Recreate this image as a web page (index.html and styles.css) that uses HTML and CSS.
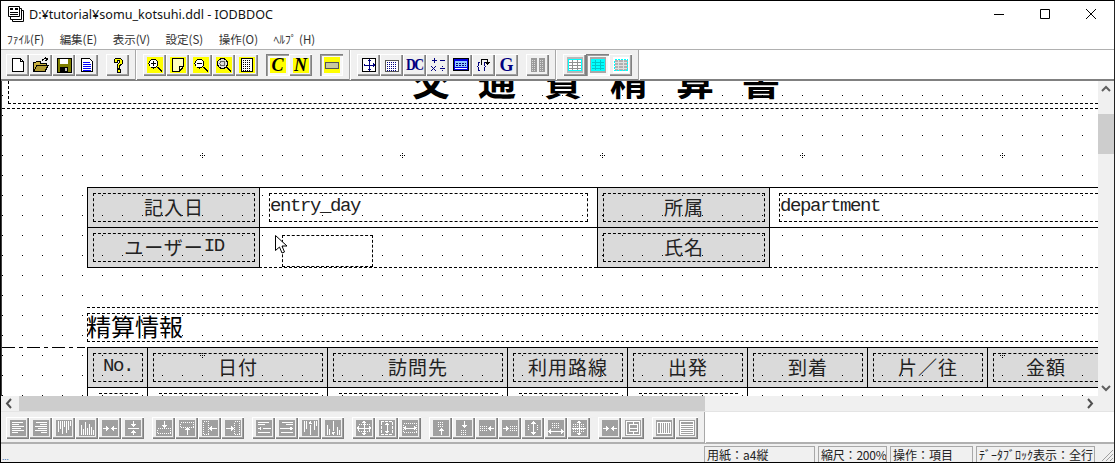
FILE: index.html
```html
<!DOCTYPE html>
<html lang="ja">
<head>
    <meta charset="UTF-8">
    <title>IODBDOC</title>
    <link rel="stylesheet" href="styles.css">
</head>
<body>
<svg class="defs" width="0" height="0">
    <defs>
        <!-- top toolbar -->
        <symbol id="i-new" viewBox="0 0 16 16"><path d="M2.5 1.5h8l3 3v10h-11z" fill="#fff" stroke="#000"/><path d="M10.5 1.5v3h3" fill="none" stroke="#000"/></symbol>
        <symbol id="i-open" viewBox="0 0 16 16"><path d="M.5 14.5v-9h2l1-1h4v2h6v2h-9l-3 6h10l3-6" fill="#c8b040" stroke="#000"/><path d="M1 14l3-5.5h11l-3 6z" fill="#b09a30" stroke="#000"/><path d="M9 4c1-2 3-3 5-2M12 .5l2.500 1.500-2 2" fill="none" stroke="#000"/></symbol>
        <symbol id="i-save" viewBox="0 0 16 16"><path d="M1 1h14v14H1z" fill="#808000" stroke="#000"/><path d="M4 2h8v5H4z" fill="#fff"/><path d="M4 10h8v5H4z" fill="#000"/><path d="M9 11h2v3H9z" fill="#c0c0c0"/></symbol>
        <symbol id="i-doc" viewBox="0 0 16 16"><path d="M2.500 1.500h8l3 3v10h-11z" fill="#fff" stroke="#000"/><path d="M4 5h7M4 7h8M4 9h8M4 11h8M4 13h8" stroke="#00f"/></symbol>
        <symbol id="i-help" viewBox="0 0 16 16"><path d="M4 5V3l2-2h4l2 2v4l-3 2v2H7V8l2-2V3H7v2zM7 12h3v3H7z" fill="#ff0" stroke="#000"/></symbol>
        <symbol id="i-zoomin" viewBox="0 0 16 16"><path d="M0 0h16v16H0z" fill="#ff0"/><circle cx="6.500" cy="6.500" r="4.500" fill="#fff" stroke="#000"/><path d="M4 6.500h5M6.500 4v5M10 10l5 5" stroke="#000"/><path d="M11 10l4 4" stroke="#000"/></symbol>
        <symbol id="i-page" viewBox="0 0 16 16"><path d="M0 0h16v16H0z" fill="#ff0"/><path d="M2.500 1.500h11v8l-4 5h-7z" fill="#ffffc0" stroke="#000"/><path d="M9.500 14.500v-5h4" fill="none" stroke="#000"/></symbol>
        <symbol id="i-zoomout" viewBox="0 0 16 16"><path d="M0 0h16v16H0z" fill="#ff0"/><circle cx="6.500" cy="6.500" r="4.500" fill="#fff" stroke="#000"/><path d="M4 6.500h5M10 10l5 5M11 10l4 4" stroke="#000"/></symbol>
        <symbol id="i-zooms" viewBox="0 0 16 16"><path d="M0 0h16v16H0z" fill="#ff0"/><circle cx="6.500" cy="6.500" r="5" fill="#ddd" stroke="#000"/><circle cx="6.500" cy="6.500" r="2.500" fill="none" stroke="#666"/><path d="M10 10l5 5M11 10l4 4" stroke="#000"/></symbol>
        <symbol id="i-dots" viewBox="0 0 16 16"><path d="M0 0h16v16H0z" fill="#ff0"/><path d="M2.500 1.500h11v13h-11z" fill="#fff" stroke="#000"/><path d="M4 3.500h8M4 5.500h8M4 7.500h8M4 9.500h8M4 11.500h8M4 13h8" stroke="#000" stroke-dasharray="1 1"/></symbol>
        <symbol id="i-rect" viewBox="0 0 16 16"><path d="M0 0h16v16H0z" fill="#ff0"/><path d="M1.500 5.500h13v6h-13z" fill="#c8c8a0" stroke="#555"/></symbol>
        <symbol id="i-move" viewBox="0 0 16 16"><path d="M1.500 1.500h13v13h-13z" fill="#fff" stroke="#000"/><path d="M8 3v10M3 8h10" stroke="#000080"/><path d="M8 2l2 2H6zM8 14l2-2H6zM2 8l2-2v4zM14 8l-2-2v4z" fill="#000080"/></symbol>
        <symbol id="i-table" viewBox="0 0 16 16"><path d="M1.500 3.500h13v11h-13z" fill="#fff" stroke="#555"/><path d="M3 5.500h10M3 7.500h10M3 9.500h10M3 11.500h10M3 13.500h10" stroke="#000080" stroke-dasharray="1 1"/></symbol>
        <symbol id="i-calc" viewBox="0 0 16 16"><path d="M4 1v5M1.500 3.500h5M10 3.500h5M1 9l5 5M6 9l-5 5M10 11.500h5" stroke="#000080" fill="none"/><path d="M12 9h1v1h-1zM12 13h1v1h-1z" fill="#000080"/></symbol>
        <symbol id="i-win" viewBox="0 0 16 16"><path d="M.5 1.500h15v12H.5z" fill="#0000e0" stroke="#000"/><path d="M2 4h12v6H2z" fill="#90c8ff"/><path d="M3 6h10M3 8h10" stroke="#000080" stroke-dasharray="2 1"/><path d="M2 11h12v1H2z" fill="#fff"/></symbol>
        <symbol id="i-brace" viewBox="0 0 16 16"><path d="M3.500 5.500h-1v3l-1 1 1 1v3h1M7.500 5.500h1v3l1 1-1 1v3h-1" fill="none" stroke="#000080"/><path d="M5.500 8V2.500h6V6" fill="none" stroke="#000"/><path d="M9 5h5l-2.500 3z" fill="#000"/></symbol>
        <symbol id="i-off" viewBox="0 0 16 16"><path d="M1 1h6v14H1zM9 1h6v14H9z" fill="#9a9a9a"/><path d="M2 3h4M2 5h4M2 7h4M2 9h4M2 11h4M2 13h4M10 3h4M10 5h4M10 7h4M10 9h4M10 11h4M10 13h4" stroke="#d8d8d8" stroke-dasharray="1 1"/></symbol>
        <symbol id="i-grid1" viewBox="0 0 16 16"><path d="M0 0h16v16H0z" fill="#b8b8b8"/><path d="M1.500 2.500h13v11h-13z" fill="#fff" stroke="#0ff"/><path d="M2 5.500h12M2 8.500h12M2 11h12M5.500 3v10M10.500 3v10" stroke="#909090"/></symbol>
        <symbol id="i-grid2" viewBox="0 0 16 16"><path d="M0 0h16v16H0z" fill="#a8a8a8"/><path d="M1 2h14v12H1z" fill="#0ff"/><path d="M2 5.500h12M2 8.500h12M2 11h12M5.500 3v10M10.500 3v10" stroke="#00c8c8"/></symbol>
        <symbol id="i-grid3" viewBox="0 0 16 16"><path d="M0 0h16v16H0z" fill="#fff"/><path d="M1.500 2.500h13v11h-13z" fill="#b0b0b0" stroke="#0ff" stroke-dasharray="2 1"/><path d="M2 5.500h12M2 8.500h12M2 11h12M5.500 3v10M10.500 3v10" stroke="#e0e0e0"/></symbol>

        <!-- bottom toolbar: white marks on gray -->
        <symbol id="b-left" viewBox="0 0 16 16"><path d="M0 0h16v16H0z" fill="#a0a0a0"/><path d="M2 2.500h11M2 4.500h7M2 6.500h12M2 8.500h9M2 10.500h12M2 12.500h6" stroke="#fff"/></symbol>
        <symbol id="b-right" viewBox="0 0 16 16"><path d="M0 0h16v16H0z" fill="#a0a0a0"/><path d="M3 2.500h11M7 4.500h7M2 6.500h12M5 8.500h9M2 10.500h12M8 12.500h6" stroke="#fff"/></symbol>
        <symbol id="b-top" viewBox="0 0 16 16"><path d="M0 0h16v16H0z" fill="#a0a0a0"/><path d="M2.500 1v11M4.500 1v8M6.500 1v13M8.500 1v6M10.500 1v12M12.500 1v9M14.500 1v5" stroke="#fff"/></symbol>
        <symbol id="b-bottom" viewBox="0 0 16 16"><path d="M0 0h16v16H0z" fill="#a0a0a0"/><path d="M2.500 15V5M4.500 15V9M6.500 15V2M8.500 15V8M10.500 15V4M12.500 15V7M14.500 15V10" stroke="#fff"/></symbol>
        <symbol id="b-inh" viewBox="0 0 16 16"><path d="M0 0h16v16H0z" fill="#a0a0a0"/><path d="M1 8.500h5M10 8.500h5" stroke="#fff"/><path d="M7 8.500l-3-3v6zM9 8.500l3-3v6z" fill="#fff"/></symbol>
        <symbol id="b-inv" viewBox="0 0 16 16"><path d="M0 0h16v16H0z" fill="#a0a0a0"/><path d="M8.500 1v4M8.500 11v4M3 8.500h11" stroke="#fff"/><path d="M8.500 7l-3-3h6zM8.500 10l-3 3h6z" fill="#fff"/></symbol>
        <symbol id="b-dtop" viewBox="0 0 16 16"><path d="M0 0h16v16H0z" fill="#a0a0a0"/><path d="M8.500 1v5" stroke="#fff"/><path d="M8.500 8l-3-3h6z" fill="#fff"/><path d="M1.500 8.500h13v5h-13z" fill="none" stroke="#fff" stroke-dasharray="1 1"/></symbol>
        <symbol id="b-dbot" viewBox="0 0 16 16"><path d="M0 0h16v16H0z" fill="#a0a0a0"/><path d="M1.500 2.500h13v5h-13z" fill="none" stroke="#fff" stroke-dasharray="1 1"/><path d="M8.500 15v-5" stroke="#fff"/><path d="M8.500 7l-3 3h6z" fill="#fff"/></symbol>
        <symbol id="b-dleft" viewBox="0 0 16 16"><path d="M0 0h16v16H0z" fill="#a0a0a0"/><path d="M1.500 1.500h5v13h-5z" fill="none" stroke="#fff" stroke-dasharray="1 1"/><path d="M10 8.500h5" stroke="#fff"/><path d="M7 8.500l3-3v6z" fill="#fff"/></symbol>
        <symbol id="b-dright" viewBox="0 0 16 16"><path d="M0 0h16v16H0z" fill="#a0a0a0"/><path d="M9.500 1.500h5v13h-5z" fill="none" stroke="#fff" stroke-dasharray="1 1"/><path d="M1 8.500h5" stroke="#fff"/><path d="M9 8.500l-3-3v6z" fill="#fff"/></symbol>
        <symbol id="b-lleft" viewBox="0 0 16 16"><path d="M0 0h16v16H0z" fill="#a0a0a0"/><path d="M2 2.500h11M2 4.500h7M7 8.500h8M2 12.500h12" stroke="#fff"/><path d="M2 8.500l3-2v4z" fill="#fff"/></symbol>
        <symbol id="b-lright" viewBox="0 0 16 16"><path d="M0 0h16v16H0z" fill="#a0a0a0"/><path d="M3 2.500h11M7 4.500h7M1 8.500h10M2 12.500h12" stroke="#fff"/><path d="M14 8.500l-3-2v4z" fill="#fff"/></symbol>
        <symbol id="b-ltop" viewBox="0 0 16 16"><path d="M0 0h16v16H0z" fill="#a0a0a0"/><path d="M2.500 1v11M4.500 1v8M8.500 5v10M12.500 1v9M14.500 1v5" stroke="#fff"/><path d="M8.500 1l-2 3h4z" fill="#fff"/></symbol>
        <symbol id="b-lbot" viewBox="0 0 16 16"><path d="M0 0h16v16H0z" fill="#a0a0a0"/><path d="M2.500 15V5M4.500 15V9M8.500 1v10M12.500 15V7M14.500 15V10" stroke="#fff"/><path d="M8.500 15l-2-3h4z" fill="#fff"/></symbol>
        <symbol id="b-cross" viewBox="0 0 16 16"><path d="M0 0h16v16H0z" fill="#a0a0a0"/><path d="M2.500 4.500h11v7h-11z" fill="none" stroke="#fff" stroke-dasharray="1 1"/><path d="M8 2v12M1 8h14" stroke="#fff"/><path d="M8 0l2 3H6zM8 16l2-3H6zM0 8l3-2v4zM16 8l-3-2v4z" fill="#fff"/></symbol>
        <symbol id="b-vbox" viewBox="0 0 16 16"><path d="M0 0h16v16H0z" fill="#a0a0a0"/><path d="M2 1.500h12M2 14.500h12M2.500 2v12M13.500 2v12" stroke="#fff" stroke-dasharray="3 1"/><path d="M8 3v10" stroke="#fff"/><path d="M8 2l2 3H6zM8 14l2-3H6z" fill="#fff"/></symbol>
        <symbol id="b-hbox" viewBox="0 0 16 16"><path d="M0 0h16v16H0z" fill="#a0a0a0"/><path d="M1.500 3.500h13v9h-13z" fill="none" stroke="#fff" stroke-dasharray="1 1"/><path d="M2 8h12" stroke="#fff"/><path d="M1 8l3-2v4zM15 8l-3-2v4z" fill="#fff"/></symbol>
        <symbol id="b-sup" viewBox="0 0 16 16"><path d="M0 0h16v16H0z" fill="#a0a0a0"/><path d="M5 2h6M5 4h6M5 6h6" stroke="#fff" stroke-dasharray="1 1"/><path d="M8.500 15v-5" stroke="#fff"/><path d="M8.500 8l-3 3h6z" fill="#fff"/></symbol>
        <symbol id="b-sdown" viewBox="0 0 16 16"><path d="M0 0h16v16H0z" fill="#a0a0a0"/><path d="M8.500 1v5" stroke="#fff"/><path d="M8.500 8l-3-3h6z" fill="#fff"/><path d="M5 10h6M5 12h6M5 14h6" stroke="#fff" stroke-dasharray="1 1"/></symbol>
        <symbol id="b-sleft" viewBox="0 0 16 16"><path d="M0 0h16v16H0z" fill="#a0a0a0"/><path d="M1 6.500h7M1 8.500h7M1 10.500h7" stroke="#fff" stroke-dasharray="1 1"/><path d="M10 8.500h5" stroke="#fff"/><path d="M9 8.500l3-3v6z" fill="#fff"/></symbol>
        <symbol id="b-sright" viewBox="0 0 16 16"><path d="M0 0h16v16H0z" fill="#a0a0a0"/><path d="M1 8.500h5" stroke="#fff"/><path d="M7 8.500l-3-3v6z" fill="#fff"/><path d="M8 6.500h7M8 8.500h7M8 10.500h7" stroke="#fff" stroke-dasharray="1 1"/></symbol>
        <symbol id="b-vdots" viewBox="0 0 16 16"><path d="M0 0h16v16H0z" fill="#a0a0a0"/><path d="M8 3v10" stroke="#fff"/><path d="M8 1l3 3H5zM8 15l3-3H5z" fill="#fff"/><path d="M3.500 5v6M12.500 5v6" stroke="#fff" stroke-dasharray="1 1"/></symbol>
        <symbol id="b-hdots" viewBox="0 0 16 16"><path d="M0 0h16v16H0z" fill="#a0a0a0"/><path d="M4 3h8M4 5h8M4 7h8" stroke="#fff" stroke-dasharray="1 1"/><path d="M2 11.500h12" stroke="#fff"/><path d="M0 11.500l3-3v6zM16 11.500l-3-3v6z" fill="#fff"/></symbol>
        <symbol id="b-cdots" viewBox="0 0 16 16"><path d="M0 0h16v16H0z" fill="#a0a0a0"/><path d="M2 4.500h12M2 6.500h12M2 9.500h12M2 11.500h12" stroke="#fff" stroke-dasharray="1 1"/><path d="M8 2v12M1 8h14" stroke="#fff"/><path d="M8 0l2 3H6zM8 16l2-3H6z" fill="#fff"/></symbol>
        <symbol id="b-center" viewBox="0 0 16 16"><path d="M0 0h16v16H0z" fill="#a0a0a0"/><path d="M1 8.500h4M11 8.500h4" stroke="#fff"/><path d="M7 8.500l-3-3v6zM9 8.500l3-3v6z" fill="#fff"/></symbol>
        <symbol id="b-page" viewBox="0 0 16 16"><path d="M0 0h16v16H0z" fill="#a0a0a0"/><path d="M1.500 1.500h13v13h-13zM8.500 1v3M8.500 12v3M4.500 4.500h8v7h-8zM4 8h9" fill="none" stroke="#fff"/></symbol>
        <symbol id="b-vlines" viewBox="0 0 16 16"><path d="M0 0h16v16H0z" fill="#a0a0a0"/><path d="M1.500 2.500h13v11h-13zM4.500 3v10M6.500 3v10M8.500 3v10M10.500 3v10M12.500 3v10" fill="none" stroke="#fff"/></symbol>
        <symbol id="b-hlines" viewBox="0 0 16 16"><path d="M0 0h16v16H0z" fill="#a0a0a0"/><path d="M1.500 1.500h13v13h-13zM2 4.500h12M2 6.500h12M2 8.500h12M2 10.500h12M2 12.500h12" fill="none" stroke="#fff"/></symbol>
        <pattern id="grid-dots" width="20" height="20" patternUnits="userSpaceOnUse"><rect x="0" y="14" width="1" height="1" fill="#000"/></pattern>
        <path id="mark" d="M0-2h1v1H0zM0 2h1v1H0zM-2 0h1v1h-1zM2 0h1v1H2z" fill="#000"/>
    </defs>
</svg>

<div class="window">
    <div class="titlebar">
        <svg class="app-icon" width="16" height="16" viewBox="0 0 16 16">
            <path d="M4.500 4.500h11v11h-11z" fill="#fff" stroke="#000"/>
            <path d="M2.500 2.500h11v11h-11z" fill="#fff" stroke="#000"/>
            <path d="M.5.500h11v10h-11z" fill="#fff" stroke="#000" stroke-width="1"/>
            <path d="M2 2h3v2H2zM7 2h3v2H7zM2 6h8v1H2zM2 8h8v1H2z" fill="#000"/>
        </svg>
        <span class="title-text">D:¥tutorial¥somu_kotsuhi.ddl - IODBDOC</span>
        <div class="win-controls">
            <div class="win-btn"><svg width="10" height="10"><path d="M0 5.500h10" stroke="#000"/></svg></div>
            <div class="win-btn"><svg width="10" height="10"><path d="M.5.500h9v9h-9z" fill="none" stroke="#000"/></svg></div>
            <div class="win-btn"><svg width="10" height="10"><path d="M0 0l10 10M10 0L0 10" stroke="#000"/></svg></div>
        </div>
    </div>

    <div class="menubar">
        <span class="menu-item">ﾌｧｲﾙ(F)</span>
        <span class="menu-item">編集(E)</span>
        <span class="menu-item">表示(V)</span>
        <span class="menu-item">設定(S)</span>
        <span class="menu-item">操作(O)</span>
        <span class="menu-item">ﾍﾙﾌﾟ (H)</span>
    </div>

    <div class="toolbar top-bar">
        <div class="tools">
            <div class="group">
                <div class="tb"><svg><use href="#i-new"/></svg></div>
                <div class="tb"><svg><use href="#i-open"/></svg></div>
                <div class="tb"><svg><use href="#i-save"/></svg></div>
                <div class="tb"><svg><use href="#i-doc"/></svg></div>
            </div>
            <div class="group">
                <div class="tb"><svg><use href="#i-help"/></svg></div>
            </div>
            <div class="sep"></div>
            <div class="group">
                <div class="tb"><svg><use href="#i-zoomin"/></svg></div>
                <div class="tb"><svg><use href="#i-page"/></svg></div>
                <div class="tb"><svg><use href="#i-zoomout"/></svg></div>
                <div class="tb"><svg><use href="#i-zooms"/></svg></div>
                <div class="tb"><svg><use href="#i-dots"/></svg></div>
            </div>
            <div class="group">
                <div class="tb pressed"><span class="glyph-y">C</span></div>
                <div class="tb"><span class="glyph-y">N</span></div>
            </div>
            <div class="group">
                <div class="tb pressed"><svg><use href="#i-rect"/></svg></div>
            </div>
            <div class="sep"></div>
            <div class="group">
                <div class="tb"><svg><use href="#i-move"/></svg></div>
                <div class="tb"><svg><use href="#i-table"/></svg></div>
                <div class="tb"><span class="glyph-b narrow">DC</span></div>
                <div class="tb"><svg><use href="#i-calc"/></svg></div>
                <div class="tb"><svg><use href="#i-win"/></svg></div>
                <div class="tb"><svg><use href="#i-brace"/></svg></div>
                <div class="tb"><span class="glyph-b">G</span></div>
            </div>
            <div class="group">
                <div class="tb"><svg><use href="#i-off"/></svg></div>
            </div>
            <div class="sep"></div>
            <div class="group">
                <div class="tb"><svg><use href="#i-grid1"/></svg></div>
                <div class="tb pressed"><svg><use href="#i-grid2"/></svg></div>
                <div class="tb"><svg><use href="#i-grid3"/></svg></div>
            </div>
            <div class="sep last"></div>
        </div>
    </div>

    <div class="workarea">
        <div class="canvas">
            <div class="report-title">交通費精算書</div>
            <div class="title-box"></div>
            <div class="title-rule"></div>

            <div class="sheet head-table">
                <div class="cell label"><div class="field">記入日</div></div>
                <div class="cell"><div class="field value">entry_day</div></div>
                <div class="cell label"><div class="field">所属</div></div>
                <div class="cell open"><div class="field value">department</div></div>
                <div class="cell label low"><div class="field">ユーザー<span class="half">ID</span></div></div>
                <div class="cell low-open"></div>
                <div class="cell label low"><div class="field">氏名</div></div>
                <div class="cell low-open"></div>
            </div>

            <div class="section">
                <div class="section-title">精算情報</div>
            </div>
            <div class="dash-dot"></div>

            <div class="sheet detail-table">
                <div class="cell label"><div class="field"><span class="half">No.</span></div></div>
                <div class="cell label"><div class="field">日付</div></div>
                <div class="cell label"><div class="field">訪問先</div></div>
                <div class="cell label"><div class="field">利用路線</div></div>
                <div class="cell label"><div class="field">出発</div></div>
                <div class="cell label"><div class="field">到着</div></div>
                <div class="cell label"><div class="field">片／往</div></div>
                <div class="cell label"><div class="field">金額</div></div>
                <div class="row-cell"><div class="row-dash"></div></div>
                <div class="row-cell"><div class="row-dash"></div></div>
                <div class="row-cell"><div class="row-dash"></div></div>
                <div class="row-cell"><div class="row-dash"></div></div>
                <div class="row-cell"><div class="row-dash"></div></div>
                <div class="row-cell"></div>
            </div>

            <svg class="grid-layer" width="100%" height="100%">
                <rect width="100%" height="100%" fill="url(#grid-dots)"/>
                <use href="#mark" x="200" y="74"/>
                <use href="#mark" x="400" y="74"/>
                <use href="#mark" x="600" y="74"/>
                <use href="#mark" x="800" y="74"/>
                <use href="#mark" x="1000" y="74"/>
                <use href="#mark" x="200" y="274"/>
                <use href="#mark" x="1000" y="274"/>
            </svg>

            <div class="selection"></div>
            <svg class="cursor" width="13" height="20" viewBox="0 0 13 20">
                <path d="M.5.500v15l4-3.500 2.500 6 2.500-1-2.500-6h5z" fill="#fff" stroke="#000"/>
            </svg>
        </div>
        <div class="vscroll">
            <svg width="16" height="16" viewBox="0 0 16 16"><path d="M4 10l4-4 4 4" fill="none" stroke="#606060" stroke-width="2"/></svg>
            <div class="vthumb"></div>
            <div class="vfill"></div>
            <svg width="16" height="16" viewBox="0 0 16 16"><path d="M4 6l4 4 4-4" fill="none" stroke="#606060" stroke-width="2"/></svg>
        </div>
    </div>

    <div class="hscroll">
        <svg width="17" height="15" viewBox="0 0 17 15"><path d="M10 3l-4 4.500 4 4.500" fill="none" stroke="#505050" stroke-width="2"/></svg>
        <div class="hthumb"></div>
        <div class="hfill"></div>
        <svg width="17" height="15" viewBox="0 0 17 15"><path d="M7 3l4 4.500-4 4.500" fill="none" stroke="#505050" stroke-width="2"/></svg>
        <div class="corner"></div>
    </div>

    <div class="toolbar bottom-bar">
        <div class="tools">
            <div class="group">
                <div class="tb"><svg><use href="#b-left"/></svg></div>
                <div class="tb"><svg><use href="#b-right"/></svg></div>
                <div class="tb"><svg><use href="#b-top"/></svg></div>
                <div class="tb"><svg><use href="#b-bottom"/></svg></div>
                <div class="tb"><svg><use href="#b-inh"/></svg></div>
                <div class="tb"><svg><use href="#b-inv"/></svg></div>
            </div>
            <div class="group">
                <div class="tb"><svg><use href="#b-dtop"/></svg></div>
                <div class="tb"><svg><use href="#b-dbot"/></svg></div>
                <div class="tb"><svg><use href="#b-dleft"/></svg></div>
                <div class="tb"><svg><use href="#b-dright"/></svg></div>
            </div>
            <div class="group">
                <div class="tb"><svg><use href="#b-lleft"/></svg></div>
                <div class="tb"><svg><use href="#b-lright"/></svg></div>
                <div class="tb"><svg><use href="#b-ltop"/></svg></div>
                <div class="tb"><svg><use href="#b-lbot"/></svg></div>
            </div>
            <div class="group">
                <div class="tb"><svg><use href="#b-cross"/></svg></div>
                <div class="tb"><svg><use href="#b-vbox"/></svg></div>
                <div class="tb"><svg><use href="#b-hbox"/></svg></div>
            </div>
            <div class="group">
                <div class="tb"><svg><use href="#b-sup"/></svg></div>
                <div class="tb"><svg><use href="#b-sdown"/></svg></div>
                <div class="tb"><svg><use href="#b-sleft"/></svg></div>
                <div class="tb"><svg><use href="#b-sright"/></svg></div>
                <div class="tb"><svg><use href="#b-vdots"/></svg></div>
                <div class="tb"><svg><use href="#b-hdots"/></svg></div>
                <div class="tb"><svg><use href="#b-cdots"/></svg></div>
            </div>
            <div class="group">
                <div class="tb"><svg><use href="#b-center"/></svg></div>
                <div class="tb"><svg><use href="#b-page"/></svg></div>
            </div>
            <div class="group">
                <div class="tb"><svg><use href="#b-vlines"/></svg></div>
                <div class="tb"><svg><use href="#b-hlines"/></svg></div>
            </div>
            <div class="sep last"></div>
        </div>
    </div>

    <div class="statusbar">
        <span class="status-msg">...</span>
        <div class="panel paper">用紙：a4縦</div>
        <div class="panel scale">縮尺：200%</div>
        <div class="panel mode">操作：項目</div>
        <div class="panel block">ﾃﾞｰﾀﾌﾞﾛｯｸ表示：全行</div>
        <svg class="grip" width="16" height="16" viewBox="0 0 16 16"><path d="M15 4L4 15M15 8l-7 7M15 12l-3 3" stroke="#a0a0a0"/></svg>
    </div>
</div>
</body>
</html>
```

FILE: styles.css
```css
html, body {
    margin: 0;
    padding: 0;
    background-color: #fff;
}
body {
    font-family: "Noto Sans CJK JP", "Noto Sans", sans-serif;
    color: #000;
    overflow: hidden;
}
.defs {
    position: absolute;
}
.window {
    width: 1115px;
    height: 463px;
    box-sizing: border-box;
    display: flex;
    flex-direction: column;
    border-top: 1px solid #000;
    border-left: 1px solid #000;
    border-bottom: 1px solid #000;
    border-right: 1px solid #222;
    overflow: hidden;
}

/* title + menu */
.titlebar {
    height: 28px;
    display: flex;
    align-items: center;
    flex: none;
}
.app-icon {
    margin-left: 7px;
    margin-top: -2px;
}
.title-text {
    margin-left: 5px;
    margin-top: -2px;
    font-family: "Noto Sans", "Noto Sans CJK JP", sans-serif;
    font-size: 12.600px;
    color: #111;
}
.win-controls {
    margin-left: auto;
    display: flex;
}
.win-btn {
    width: 46px;
    height: 28px;
    display: flex;
    align-items: center;
    justify-content: center;
    margin-top: -3px;
}
.win-btn svg {
    display: block;
}
.menubar {
    height: 20px;
    flex: none;
    display: flex;
    align-items: center;
    padding-left: 6px;
    gap: 15.500px;
    font-size: 11.500px;
    color: #333;
}
.menu-item {
    white-space: nowrap;
}

/* toolbars */
.toolbar {
    flex: none;
    display: flex;
    background-color: #fff;
}
.top-bar {
    height: 32px;
    box-sizing: border-box;
    border-top: 1px solid #b0b0b0;
    border-bottom: 2px solid #808080;
}
.bottom-bar {
    height: 33px;
    box-sizing: border-box;
    border-top: 1px solid #e4e4e4;
    border-bottom: 2px solid #b0b0b0;
}
.tools {
    display: flex;
    align-items: flex-start;
    background-color: #f0f0f0;
    padding-left: 5px;
    height: 100%;
}
.top-bar .tools {
    padding-top: 4px;
    box-sizing: border-box;
}
.bottom-bar .tools {
    padding-top: 5px;
    box-sizing: border-box;
}
.group {
    display: flex;
    margin-right: 8px;
}
.group:has(+ .sep) {
    margin-right: 6px;
}
.sep {
    width: 1px;
    height: 30px;
    margin-top: -4px;
    margin-right: 6px;
    border-left: 1px solid #a8a8a8;
    background-color: #fff;
}
.bottom-bar .sep {
    margin-top: -5px;
    height: 31px;
}
.sep.last {
    margin-right: 0;
}
.tb {
    width: 23px;
    height: 22px;
    box-sizing: border-box;
    display: flex;
    align-items: center;
    justify-content: center;
    background-color: #f0f0f0;
    box-shadow: inset 1px 1px 0 #fff, inset -1px -1px 0 #808080, inset -2px -2px 0 #a0a0a0;
}
.tb.pressed {
    background-color: #f8f8f8;
    box-shadow: inset 1px 1px 0 #808080, inset 2px 2px 0 #a0a0a0, inset -1px -1px 0 #fff;
}
.tb svg {
    width: 16px;
    height: 16px;
    shape-rendering: crispEdges;
    display: block;
}
.glyph-y {
    width: 16px;
    height: 15px;
    background-color: #ff0;
    font-family: "Liberation Serif", serif;
    font-weight: 700;
    font-style: italic;
    font-size: 18px;
    line-height: 15px;
    text-align: center;
}
.glyph-b {
    font-family: "Liberation Serif", serif;
    font-weight: 700;
    font-size: 18px;
    line-height: 18px;
    color: #000080;
}
.glyph-b.narrow {
    font-size: 17px;
    letter-spacing: -2px;
    transform: scaleX(.8);
}

/* design surface */
.workarea {
    flex: none;
    height: 315px;
    display: flex;
}
.canvas {
    position: relative;
    flex: 1;
    overflow: hidden;
    border-left: 1px solid #404040;
    background-color: #fff;
}
.grid-layer {
    position: absolute;
    left: 0;
    top: 0;
    pointer-events: none;
    shape-rendering: crispEdges;
}
.report-title {
    position: absolute;
    left: 410px;
    top: -21px;
    font-size: 38px;
    line-height: 38px;
    font-weight: 700;
    letter-spacing: 28px;
    white-space: nowrap;
}
.title-box {
    position: absolute;
    left: 6px;
    right: 0;
    top: 0;
    height: 22px;
    border-left: 1px dashed #000;
    border-bottom: 1px dashed #000;
}
.title-rule {
    position: absolute;
    left: 0;
    right: 0;
    top: 27px;
    border-top: 1px dashed #000;
}
.sheet {
    position: absolute;
    left: 85px;
    right: 0;
    display: grid;
}
.head-table {
    top: 106px;
    grid-template-columns: 172px 338px 172px 1fr;
    grid-template-rows: 40px 41px;
}
.detail-table {
    top: 266px;
    grid-template-columns: 60px 180px 180px 120px 120px 120px 120px 1fr;
    grid-template-rows: 41px 8px;
}
.cell {
    box-sizing: border-box;
    border-top: 1px solid #000;
    border-left: 1px solid #000;
    padding: 5px 4px 5px 5px;
}
.head-table .cell:not(.label) {
    padding: 5px 9px;
}
.head-table .cell.open {
    padding-right: 0;
}
.head-table .cell.open .field {
    border-right: 0;
}
.cell.label {
    background-color: #dadada;
}
.cell.low {
    border-bottom: 1px solid #000;
}
.cell.low-open {
    border-bottom: 1px dashed #000;
}
.detail-table .cell {
    border-bottom: 1px solid #000;
}
.detail-table .cell:nth-child(8) {
    padding-right: 0;
}
.detail-table .cell:nth-child(8) .field {
    border-right: 0;
}
.field {
    box-sizing: border-box;
    height: 29px;
    padding-bottom: 3px;
    border: 1px dashed #000;
    display: flex;
    align-items: center;
    justify-content: center;
    font-size: 19px;
    letter-spacing: 1px;
    white-space: nowrap;
    overflow: hidden;
    color: #222;
}
.field.value, .half {
    font-family: "Liberation Mono", monospace;
    font-size: 19px;
    letter-spacing: -1.400px;
}
.field.value {
    justify-content: flex-start;
}
.section {
    position: absolute;
    left: 85px;
    right: 0;
    top: 226px;
    height: 35px;
    padding-top: 5px;
    box-sizing: border-box;
    border-top: 1px dashed #000;
}
.section-title {
    box-sizing: border-box;
    height: 29px;
    border: 1px dashed #000;
    border-right: 0;
    margin-left: 0;
    padding-bottom: 3px;
    font-size: 24px;
    line-height: 23px;
    text-indent: -1px;
    white-space: nowrap;
}
.dash-dot {
    position: absolute;
    left: 0;
    top: 266px;
    width: 83px;
    height: 1px;
    background-image: repeating-linear-gradient(90deg, #000 0 13px, transparent 13px 17px, #000 17px 21px, transparent 21px 25px);
}
.row-cell {
    box-sizing: border-box;
    border-left: 1px solid #000;
    padding: 5px 9px 0 11px;
    height: 8px;
}
.row-dash {
    border-top: 1px dashed #000;
}
.selection {
    position: absolute;
    left: 280px;
    top: 154px;
    width: 89px;
    height: 30px;
    border: 1px dashed #000;
    background-color: #fff;
}
.cursor {
    position: absolute;
    left: 273px;
    top: 154px;
}

/* scrollbars */
.vscroll {
    flex: none;
    width: 16px;
    display: flex;
    flex-direction: column;
    background-color: #f0f0f0;
}
.vscroll svg, .hscroll svg {
    flex: none;
    display: block;
}
.vthumb {
    flex: none;
    height: 40px;
    margin-top: 17px;
    background-color: #cdcdcd;
}
.vfill {
    flex: 1;
}
.hscroll {
    flex: none;
    height: 15px;
    display: flex;
    background-color: #f0f0f0;
}
.hthumb {
    flex: none;
    width: 686px;
    margin-left: 1px;
    background-color: #cdcdcd;
}
.hfill {
    flex: 1;
}
.corner {
    width: 16px;
}

/* status line */
.statusbar {
    flex: 1;
    display: flex;
    align-items: flex-end;
    position: relative;
    background-color: #f0f0f0;
}
.status-msg {
    position: absolute;
    left: 1px;
    bottom: 0;
    font-size: 8px;
    line-height: 10px;
    color: #1a5fa8;
}
.panel {
    box-sizing: border-box;
    height: 16px;
    border: 1px solid #a8a8a8;
    border-bottom: 0;
    font-size: 12px;
    line-height: 16px;
    padding-left: 2px;
    white-space: nowrap;
    overflow: hidden;
    color: #222;
}
.paper {
    width: 111px;
    margin-left: 703px;
}
.scale {
    width: 69px;
    margin-left: 3px;
    letter-spacing: -.2px;
}
.mode {
    width: 83px;
    margin-left: 3px;
}
.block {
    width: 119px;
    margin-left: 3px;
}
.grip {
    position: absolute;
    right: 0;
    bottom: 0;
}
```
